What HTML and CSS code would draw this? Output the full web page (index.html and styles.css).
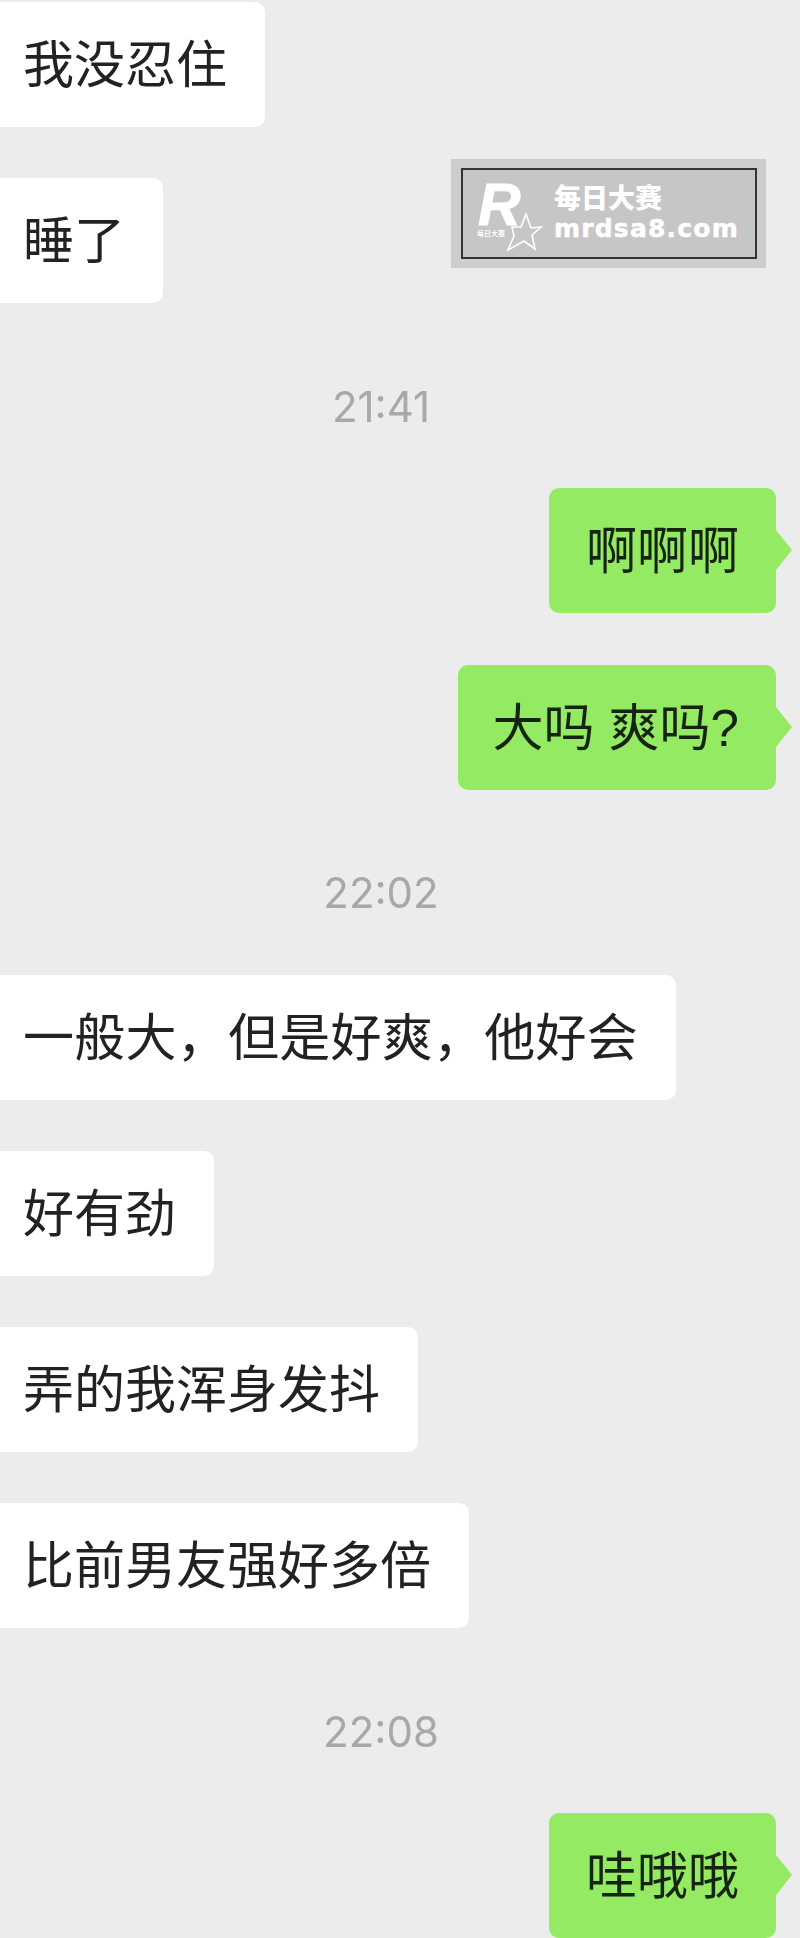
FILE: index.html

```html
<!DOCTYPE html>
<html lang="zh-CN">
<head>
  <meta charset="UTF-8">
  <meta name="viewport" content="width=device-width, initial-scale=1.0">
  <title>聊天记录</title>
  <link rel="stylesheet" href="styles.css">
</head>
<body>
  <div class="chat">
    <div class="msg"><div class="bubble">我没忍住</div></div>
    <div class="msg"><div class="bubble">睡了</div></div>

    <div class="time">21:41</div>
    <div class="msg me"><div class="bubble">啊啊啊</div></div>
    <div class="msg me"><div class="bubble short">大吗 爽吗?</div></div>

    <div class="time">22:02</div>
    <div class="msg"><div class="bubble wide">一般大，但是好爽，他好会</div></div>
    <div class="msg"><div class="bubble">好有劲</div></div>
    <div class="msg"><div class="bubble">弄的我浑身发抖</div></div>
    <div class="msg"><div class="bubble">比前男友强好多倍</div></div>

    <div class="time">22:08</div>
    <div class="msg me"><div class="bubble">哇哦哦</div></div>
  </div>

  <div class="mark">
    <div class="mark-box">
      <div class="mark-logo">
        <span class="mark-r">R</span>
        <span class="mark-small">每日大赛</span>
        <svg class="mark-star" viewBox="0 0 40 42" width="40" height="42">
          <path d="M21 3 L26 17 L36 16 L27 24 L30 38 L19 30 L3 39 L9 25 L7 16 L16 16 Z" fill="none" stroke="#fff" stroke-width="1.600"/>
        </svg>
      </div>
      <div class="mark-text">
        <div class="mark-cn">每日大赛</div>
        <div class="mark-en">mrdsa8.com</div>
      </div>
    </div>
  </div>
</body>
</html>
```

FILE: styles.css

```css
html, body {
  margin: 0;
  height: 1938px;
  overflow: hidden;
}
body {
  position: relative;
  background-color: #ececec;
  font-family: "Liberation Sans", "Noto Sans CJK SC", sans-serif;
}
.chat {
  display: flex;
  flex-direction: column;
  padding-top: 2px;
  filter: blur(0.4px);
}
.msg {
  display: flex;
  margin-bottom: 51.3px;
}
.bubble {
  position: relative;
  height: 125px;
  line-height: 127px;
  margin-left: -10px;
  padding: 0 38px 0 33px;
  font-size: 51px;
  color: #222;
  background: #fff;
  border-radius: 10px;
  white-space: nowrap;
}
.wide {
  letter-spacing: 0.25px;
}
.me {
  justify-content: flex-end;
}
.me .bubble {
  margin: 0 24px 0 0;
  padding: 0 37px;
  background: #94ea62;
  color: #142410;
}
.me .short {
  padding-left: 34.5px;
}
.me .bubble::after {
  content: "";
  position: absolute;
  left: 100%;
  top: 42px;
  border-left: 16px solid #94ea62;
  border-top: 20px solid transparent;
  border-bottom: 20px solid transparent;
}
.time {
  height: 48px;
  line-height: 48px;
  margin: 28px 0 57.7px;
  padding-right: 38px;
  text-align: center;
  font-family: Inter, "Liberation Sans", sans-serif;
  font-weight: 400;
  font-size: 42px;
  color: #a8a8a8;
}
.mark {
  position: absolute;
  left: 451px;
  top: 159px;
  width: 315px;
  height: 109px;
  box-sizing: border-box;
  padding: 9px 9px 9px 10px;
  background: #cdcdcd;
}
.mark-box {
  display: flex;
  box-sizing: border-box;
  height: 91px;
  padding: 13px 0 0 15px;
  border: 2px solid #333;
  background: #c6c6c6;
  color: #fff;
}
.mark-logo {
  position: relative;
  width: 76px;
}
.mark-r {
  display: block;
  font-weight: bold;
  font-style: italic;
  font-size: 59px;
  line-height: 44px;
  -webkit-text-stroke: 1px #fff;
}
.mark-small {
  position: absolute;
  left: -1px;
  top: 46px;
  font-family: "Noto Sans CJK SC", sans-serif;
  font-size: 7px;
  font-weight: 700;
  line-height: 9px;
  white-space: nowrap;
}
.mark-star {
  position: absolute;
  left: 27px;
  top: 28px;
}
.mark-cn {
  font-family: "Noto Sans CJK SC", sans-serif;
  font-size: 27px;
  font-weight: 900;
  line-height: 28px;
}
.mark-en {
  font-family: "DejaVu Sans", sans-serif;
  font-weight: bold;
  font-size: 25px;
  letter-spacing: 1.2px;
  line-height: 30px;
  margin-top: 3px;
  -webkit-text-stroke: 0.5px #fff;
}
```
